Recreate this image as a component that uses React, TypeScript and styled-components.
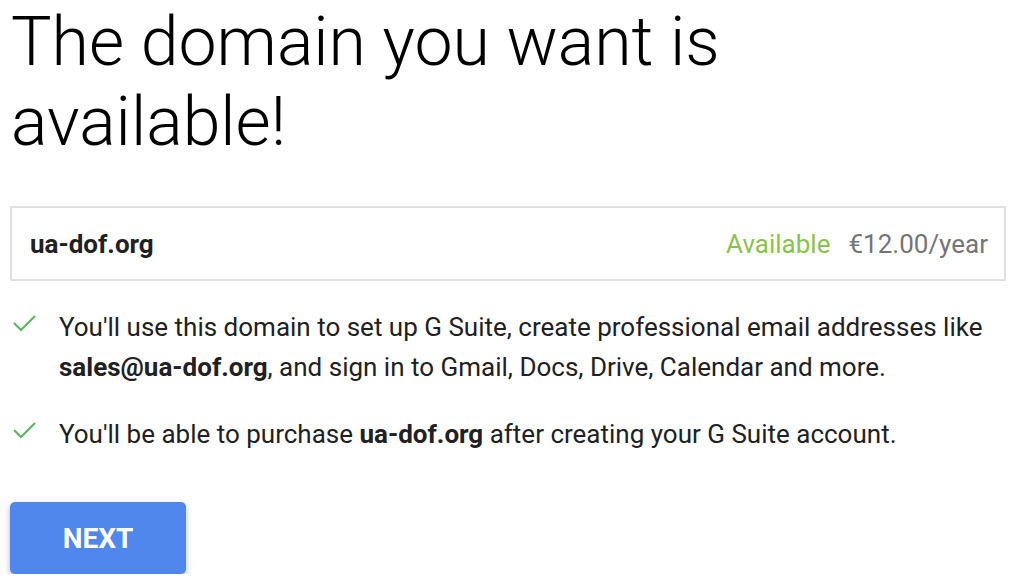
import styled, { createGlobalStyle } from "styled-components";

const GlobalStyle = createGlobalStyle`
	body {
		margin: 0;
		background: #ffffff;
		font-family: Roboto, "Noto Sans", sans-serif;
		color: #212121;
	}
`;

const Page = styled.div`
	padding: 0 10px;
	width: 996px;
`;

const Title = styled.h1`
	margin: 0;
	padding: 2px 0 0 1px;
	font-size: 68px;
	line-height: 80px;
	font-weight: 300;
	color: #000;
	width: 760px;
`;

const DomainCard = styled.div`
	margin-top: 44px;
	height: 75px;
	box-sizing: border-box;
	border: 2px solid #e0e0e0;
	display: flex;
	align-items: center;
	justify-content: space-between;
	padding: 0 16px 0 18px;
`;

const DomainName = styled.span`
	font-size: 26px;
	font-weight: 700;
	color: #212121;
`;

const Status = styled.div`
	display: flex;
	gap: 18px;
	font-size: 26px;
`;

const Available = styled.span`
	color: #8bc34a;
`;

const Price = styled.span`
	color: #757575;
`;

const Notes = styled.ul`
	list-style: none;
	margin: 26px 0 0;
	padding: 0;
	display: flex;
	flex-direction: column;
	gap: 27px;
`;

const Note = styled.li`
	display: flex;
	gap: 19px;
	font-size: 26px;
	line-height: 40px;
	color: #212121;
	b {
		font-weight: 700;
	}
`;

const Check = styled.svg`
	flex: none;
	width: 30px;
	height: 40px;
`;

const NextButton = styled.button`
	margin-top: 48px;
	width: 176px;
	height: 72px;
	border: none;
	border-radius: 5px;
	background: #5087ec;
	color: #fff;
	font-family: Roboto, sans-serif;
	font-size: 28px;
	font-weight: 700;
	box-shadow: 0 3px 6px rgba(0, 0, 0, 0.28);
	cursor: pointer;
`;

function CheckMark() {
	return (
		<Check viewBox="0 0 30 40">
			<path d="M4 16 L11 23 L25 9" fill="none" stroke="#5cb85c" strokeWidth="2.2" />
		</Check>
	);
}

function App() {
	return (
		<>
			<GlobalStyle />
			<Page>
				<Title>The domain you want is available!</Title>
				<DomainCard>
					<DomainName>ua-dof.org</DomainName>
					<Status>
						<Available>Available</Available>
						<Price>€12.00/year</Price>
					</Status>
				</DomainCard>
				<Notes>
					<Note>
						<CheckMark />
						<div>
							You'll use this domain to set up G Suite, create professional email
							addresses like <b>sales@ua-dof.org</b>, and sign in to Gmail, Docs,
							Drive, Calendar and more.
						</div>
					</Note>
					<Note>
						<CheckMark />
						<div>
							You'll be able to purchase <b>ua-dof.org</b> after creating your G
							Suite account.
						</div>
					</Note>
				</Notes>
				<NextButton>NEXT</NextButton>
			</Page>
		</>
	);
}

export default App;
